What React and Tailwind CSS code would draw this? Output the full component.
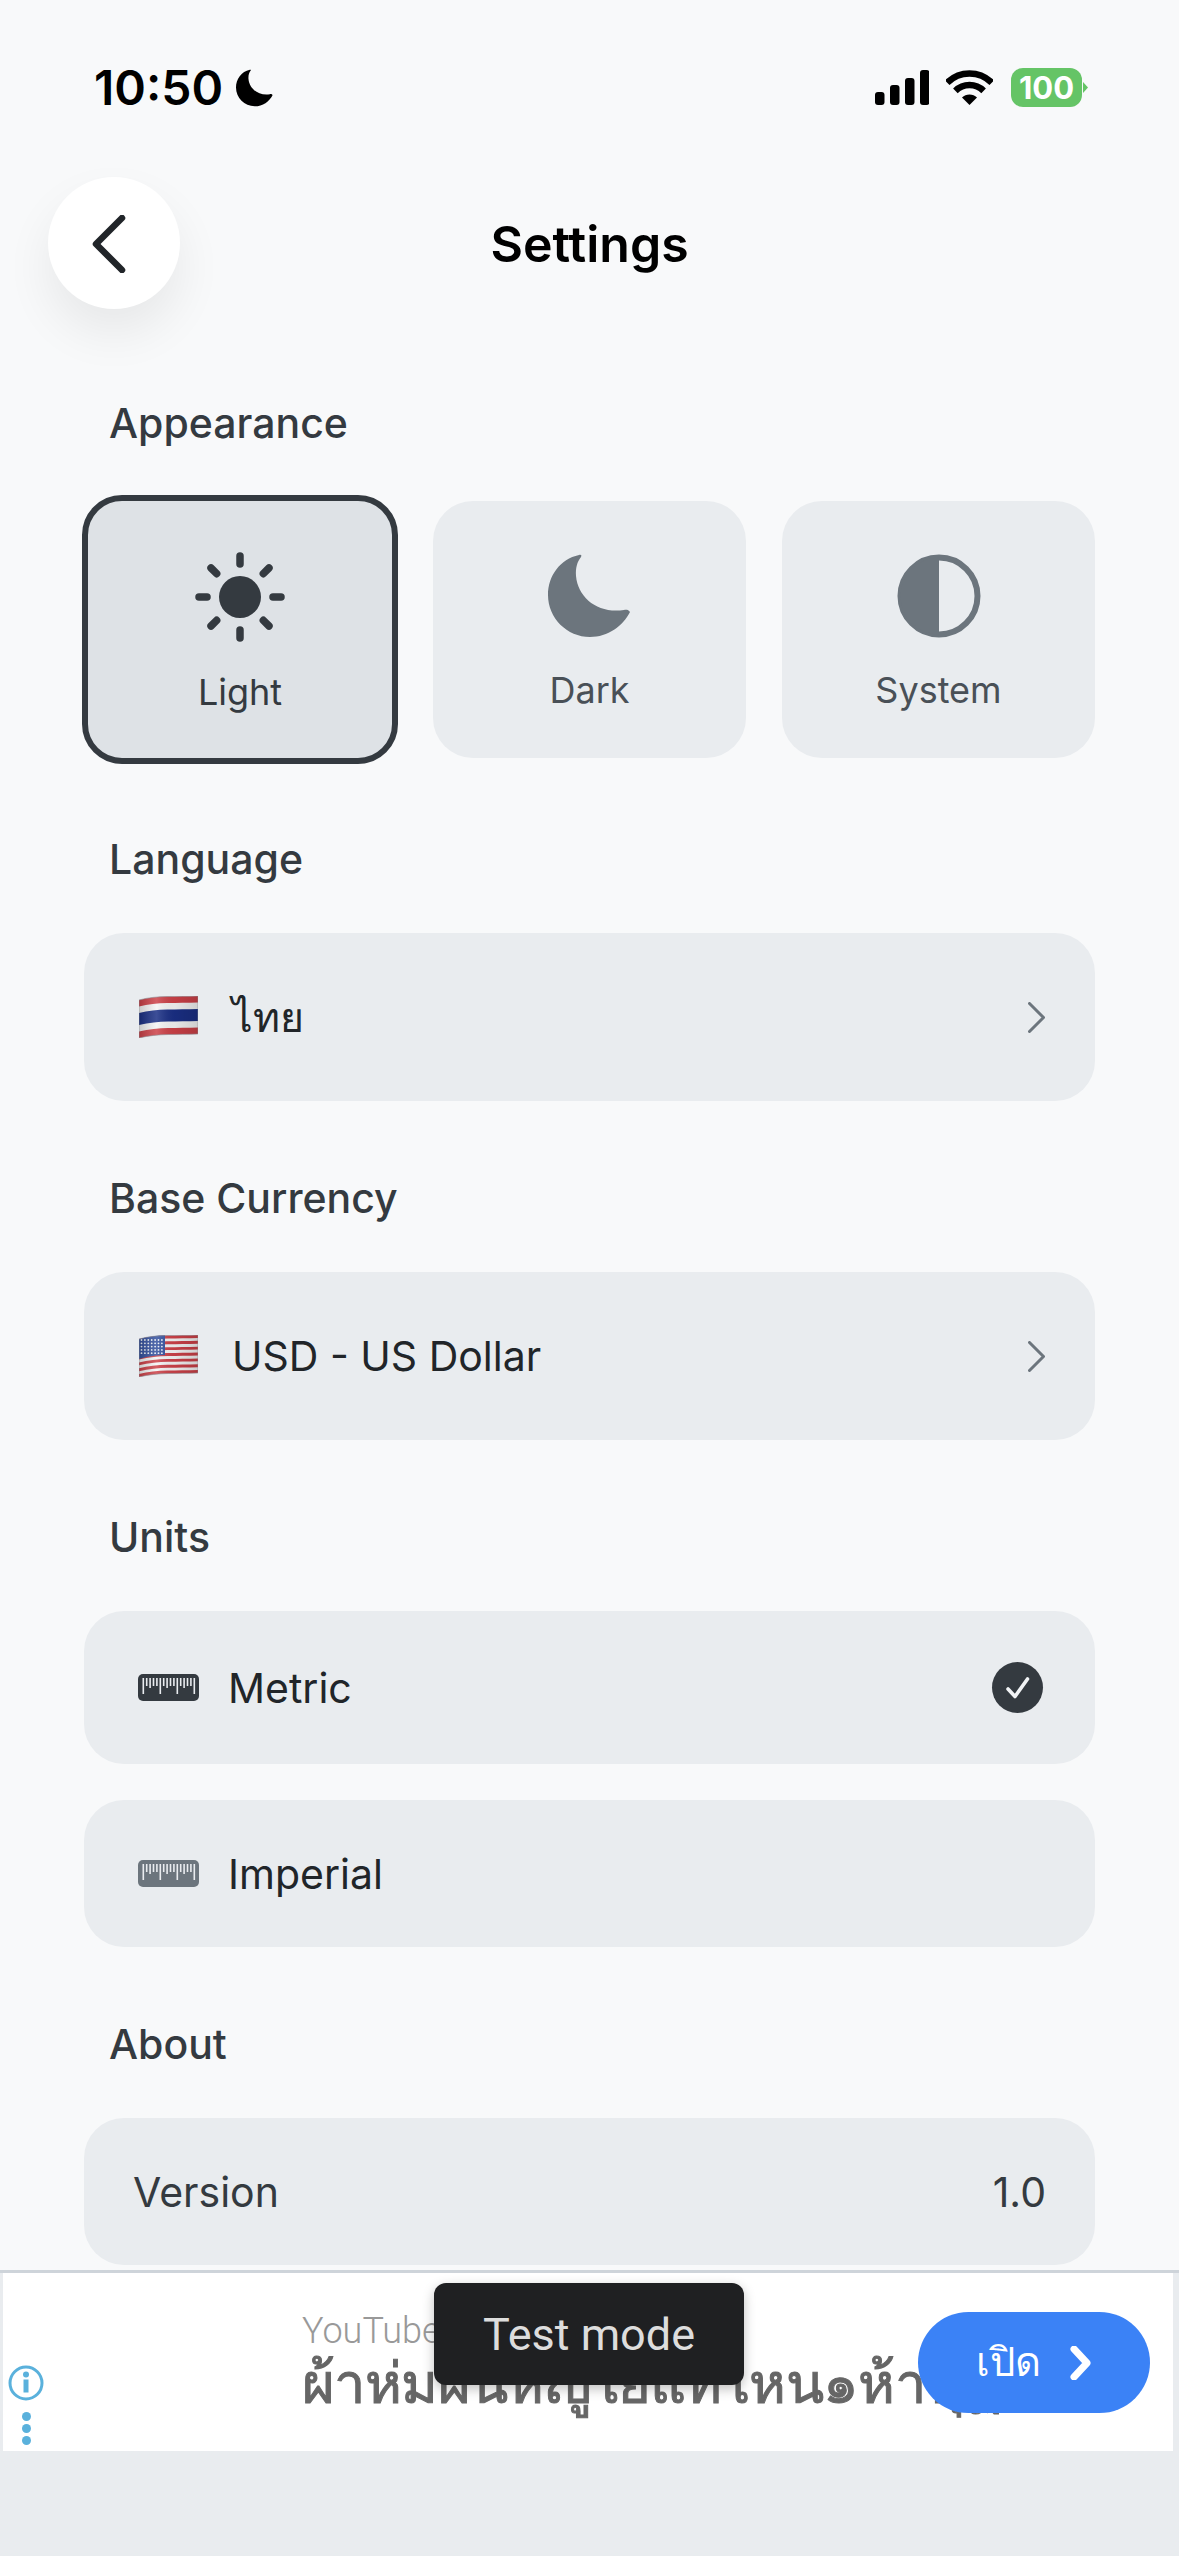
import React from "react";

const MOON = "M31 1 C12 5 0 22 0 41 C0 64 19 83 42 83 C60 83 75 72 82 58 C80.5 55.5 78 55.5 76 56 C50 60 30 44 28 22 C27.5 14 29 8 33 3 C34 1 33 .5 31 1 Z";

function Moon({ className, fill }) {
  return (
    <svg viewBox="0 0 83 84" className={className}>
      <path d={MOON} fill={fill} />
    </svg>
  );
}

function Sun() {
  const rays = [0, 45, 90, 135, 180, 225, 270, 315];
  return (
    <svg viewBox="0 0 90 90" className="w-[90px] h-[90px]">
      <circle cx="45" cy="45" r="21" fill="#343a40" />
      {rays.map((a) => (
        <line key={a} x1="45" y1="12" x2="45" y2="4" stroke="#343a40" strokeWidth="7.5" strokeLinecap="round" transform={`rotate(${a} 45 45)`} />
      ))}
    </svg>
  );
}

function Contrast() {
  return (
    <svg viewBox="0 0 84 84" className="w-[84px] h-[84px]">
      <circle cx="42" cy="42" r="38.5" fill="none" stroke="#6c757d" strokeWidth="6" />
      <path d="M42 3.5 A38.5 38.5 0 0 0 42 80.5 Z" fill="#6c757d" />
    </svg>
  );
}

function band(y0, y1) {
  return `M0 ${y0 + 4} C18 ${y0 - 1} 38 ${y0 + 1} 59 ${y0} L59 ${y1} C38 ${y1 + 1} 20 ${y1 - 1} 0 ${y1 + 4} Z`;
}

function FlagShade({ id }) {
  return (
    <>
      <defs>
        <linearGradient id={id} x1="0" y1="0" x2="1" y2="0">
          <stop offset="0" stopColor="#000" stopOpacity="0.18" />
          <stop offset="0.3" stopColor="#fff" stopOpacity="0.15" />
          <stop offset="0.6" stopColor="#000" stopOpacity="0.06" />
          <stop offset="1" stopColor="#000" stopOpacity="0.16" />
        </linearGradient>
      </defs>
      <path d={band(0, 38)} fill={`url(#${id})`} stroke="#8a8f96" strokeWidth="0.6" />
    </>
  );
}

function ThaiFlag() {
  return (
    <svg viewBox="0 0 59 42" className="w-[59px] h-[42px] shrink-0">
      <path d={band(0, 38)} fill="#cd4148" />
      <path d={band(6.5, 31.5)} fill="#f5f5f5" />
      <path d={band(13, 25)} fill="#1a2f85" />
      <FlagShade id="shade-th" />
    </svg>
  );
}

function USFlag() {
  const stripes = [0, 1, 2, 3, 4, 5, 6];
  const stars = [];
  for (let r = 0; r < 5; r++) {
    for (let c = 0; c < 7; c++) {
      stars.push(<circle key={`${r}-${c}`} cx={2.5 + c * 3.4} cy={5 + r * 3.3} r="0.9" fill="#eef1f7" />);
    }
  }
  return (
    <svg viewBox="0 0 59 42" className="w-[59px] h-[42px] shrink-0">
      <path d={band(0, 38)} fill="#f5f5f5" />
      {stripes.map((i) => (
        <path key={i} d={band(i * 5.85, i * 5.85 + 2.9)} fill="#cd4148" />
      ))}
      <path d="M0 4 C10 1.5 18 0.5 26 0.3 L26 20 C18 20 10 21 0 24 Z" fill="#34519f" />
      {stars}
      <FlagShade id="shade-us" />
    </svg>
  );
}

function Ruler({ fill }) {
  const ticks = [];
  for (let i = 0; i <= 15; i++) {
    const long = i % 5 === 0;
    const mid = !long && i % 5 === 2;
    ticks.push(<rect key={i} x={4.5 + i * 3.4} y="4" width="1.6" height={long ? 16 : mid ? 10 : 8} fill="#e9ecef" />);
  }
  return (
    <svg viewBox="0 0 61 27" className="w-[61px] h-[27px] shrink-0">
      <rect width="61" height="27" rx="5" fill={fill} />
      {ticks}
    </svg>
  );
}

function Chevron() {
  return (
    <svg viewBox="0 0 17 31" className="w-[17px] h-[31px] shrink-0">
      <path d="M1.5 1.5 L15.5 15.5 L1.5 29.5" fill="none" stroke="#6c757d" strokeWidth="3" strokeLinecap="round" strokeLinejoin="round" />
    </svg>
  );
}

function Label({ children }) {
  return <div className="h-[50px] pl-[25px] text-[41px] leading-[49px] font-medium text-[#343a40]">{children}</div>;
}

function SelectRow({ flag, text }) {
  return (
    <div className="h-[168px] rounded-[40px] bg-[#e9ecef] pl-[55px] pr-[50px] flex items-center gap-[34px] mt-[48px]">
      {flag}
      <span className="flex-1 text-[41px] leading-[50px] text-[#212529]">{text}</span>
      <Chevron />
    </div>
  );
}

function ThemeCard({ icon, label, labelClass, cardClass }) {
  return (
    <div className={cardClass}>
      <div className="h-[90px] flex items-center justify-center">{icon}</div>
      <span className={`text-[36px] leading-[44px] ${labelClass}`}>{label}</span>
    </div>
  );
}

export default function App() {
  return (
    <div className="w-[1179px] h-[2556px] overflow-hidden bg-[#f8f9fa] font-['Inter',sans-serif] flex flex-col">
      {/* status bar */}
      <div className="h-[177px] pt-[68px] pl-[94px] pr-[91px] flex items-start justify-between text-black">
        <div className="flex items-center gap-[13px] h-[39px]">
          <span className="text-[48px] leading-[39px] font-semibold">10:50</span>
          <Moon className="w-[37px] h-[38px]" fill="#000" />
        </div>
        <div className="flex items-center h-[39px]">
          <svg viewBox="0 0 54 35" className="w-[54px] h-[35px]">
            <rect x="0" y="22" width="9.5" height="13" rx="3" />
            <rect x="15" y="15" width="9.5" height="20" rx="3" />
            <rect x="30" y="8" width="9.5" height="27" rx="3" />
            <rect x="45" y="0" width="9.5" height="35" rx="3" />
          </svg>
          <svg viewBox="0 0 47 35" className="w-[47px] h-[35px] ml-[17px]">
            <path d="M1.2 12.7 A31.5 31.5 0 0 1 45.8 12.7" fill="none" stroke="#000" strokeWidth="6.5" />
            <path d="M9.4 20.9 A20 20 0 0 1 37.6 20.9" fill="none" stroke="#000" strokeWidth="6.5" />
            <path d="M23.5 35 L16 27.6 A10.5 10.5 0 0 1 31 27.6 Z" fill="#000" />
          </svg>
          <div className="ml-[18px] w-[71px] h-[39px] rounded-[12px] bg-[#65c466] flex items-center justify-center text-white text-[31px] leading-none font-bold">100</div>
          <svg viewBox="0 0 5 11" className="w-[5px] h-[11px] ml-[1px]">
            <path d="M0 0 L5 5.5 L0 11 Z" fill="#65c466" />
          </svg>
        </div>
      </div>

      {/* header */}
      <div className="h-[132px] relative flex items-center justify-center shrink-0">
        <button className="absolute left-[48px] top-0 w-[132px] h-[132px] rounded-full bg-white shadow-[0_24px_48px_rgba(0,0,0,0.07)] flex items-center justify-center">
          <svg viewBox="0 0 34 58" className="w-[34px] h-[58px] mr-[10px] mt-[2px]">
            <path d="M30 3 L4 29 L30 55" fill="none" stroke="#212529" strokeWidth="6.5" strokeLinecap="round" strokeLinejoin="round" />
          </svg>
        </button>
        <h1 className="text-[50px] leading-[60px] mt-[2px] font-semibold text-black">Settings</h1>
      </div>

      <div className="px-[84px] flex flex-col pt-[90px]">
        <Label>Appearance</Label>
        <div className="mt-[46px] -ml-[2px] h-[269px] flex items-center gap-[35px]">
          <ThemeCard
            icon={<Sun />}
            label="Light"
            labelClass="text-[#343a40] mt-[28px]"
            cardClass="w-[316px] h-[269px] rounded-[40px] border-[6px] border-[#343a40] bg-[#dee2e6] pt-[51px] flex flex-col items-center"
          />
          <ThemeCard
            icon={<Moon className="w-[83px] h-[84px]" fill="#6c757d" />}
            label="Dark"
            labelClass="text-[#495057] mt-[27px]"
            cardClass="w-[313px] h-[257px] rounded-[40px] bg-[#e9ecef] pt-[50px] flex flex-col items-center"
          />
          <ThemeCard
            icon={<Contrast />}
            label="System"
            labelClass="text-[#495057] mt-[27px]"
            cardClass="w-[313px] h-[257px] ml-[1px] rounded-[40px] bg-[#e9ecef] pt-[50px] flex flex-col items-center"
          />
        </div>

        <div className="mt-[71px]">
          <Label>Language</Label>
          <SelectRow flag={<ThaiFlag />} text="ไทย" />
        </div>

        <div className="mt-[73px]">
          <Label>Base Currency</Label>
          <SelectRow flag={<USFlag />} text="USD - US Dollar" />
        </div>

        <div className="mt-[73px]">
          <Label>Units</Label>
          <div className="mt-[48px] flex flex-col gap-[36px]">
            <div className="h-[153px] rounded-[40px] bg-[#e9ecef] pl-[54px] pr-[52px] flex items-center gap-[29px]">
              <Ruler fill="#343a40" />
              <span className="flex-1 text-[41px] leading-[50px] text-[#212529]">Metric</span>
              <div className="w-[51px] h-[51px] rounded-full bg-[#343a40] flex items-center justify-center">
                <svg viewBox="0 0 26 24" className="w-[26px] h-[24px]">
                  <path d="M3 13 L10 20.5 L22.5 3" fill="none" stroke="#f1f3f5" strokeWidth="3.6" strokeLinecap="round" strokeLinejoin="round" />
                </svg>
              </div>
            </div>
            <div className="h-[147px] rounded-[40px] bg-[#e9ecef] pl-[54px] pr-[53px] flex items-center gap-[29px]">
              <Ruler fill="#6c757d" />
              <span className="flex-1 text-[41px] leading-[50px] text-[#212529]">Imperial</span>
            </div>
          </div>
        </div>

        <div className="mt-[73px]">
          <Label>About</Label>
          <div className="mt-[48px] h-[147px] rounded-[40px] bg-[#e9ecef] pl-[49px] pr-[49px] flex items-center justify-between text-[41px] leading-[50px] text-[#343a40]">
            <span>Version</span>
            <span>1.0</span>
          </div>
        </div>
      </div>

      {/* ad banner */}
      <div className="mt-[5px] h-[181px] shrink-0 border-t-[3px] border-t-[#ced4da] bg-[#e9ecef] pl-[3px] pr-[6px]">
        <div className="relative h-full bg-white flex">
          <div className="w-[299px] shrink-0 flex flex-col pl-[5px] pt-[91px]">
            <svg viewBox="0 0 36 38" className="w-[36px] h-[38px]">
              <circle cx="18" cy="19" r="16" fill="none" stroke="#5ab1dc" strokeWidth="3" />
              <circle cx="18" cy="10.5" r="3" fill="#5ab1dc" />
              <rect x="15.5" y="15.5" width="5" height="13" fill="#5ab1dc" />
            </svg>
            <div className="w-[36px] flex flex-col items-center gap-[3px] mt-[10px]">
              <span className="w-[9px] h-[9px] rounded-full bg-[#5ab1dc]" />
              <span className="w-[9px] h-[9px] rounded-full bg-[#5ab1dc]" />
              <span className="w-[9px] h-[9px] rounded-full bg-[#5ab1dc]" />
            </div>
          </div>
          <div className="w-[720px] overflow-hidden pt-[36px] font-['Roboto',sans-serif]">
            <div className="text-[36px] leading-[44px] text-[#999999] font-light">YouTube</div>
            <div className="text-[56px] leading-[62px] tracking-[-0.6px] text-[#666666] [-webkit-text-stroke:1px_#666666] whitespace-nowrap">ผ้าห่มผืนหญูใยแท้ไหน๑ห้าฟุฏ</div>
          </div>

          <div className="absolute left-[431px] top-[10px] w-[310px] h-[102px] rounded-[12px] bg-[#1f2022] shadow-[0_4px_12px_rgba(0,0,0,0.25)] flex items-center justify-center pt-[2px] font-['Roboto',sans-serif] text-[45px] text-[#dddddd]">
            Test mode
          </div>

          <div className="absolute left-[915px] top-[39px] w-[232px] h-[101px] rounded-full bg-[#3b82f6] flex items-center justify-center gap-[28px] font-['Roboto',sans-serif] text-[40px] text-white">
            <span>เปิด</span>
            <svg viewBox="0 0 24 34" className="w-[24px] h-[34px]">
              <path d="M5 3 L18 17 L5 31" fill="none" stroke="#fff" strokeWidth="7" strokeLinecap="round" strokeLinejoin="round" />
            </svg>
          </div>
        </div>
      </div>

      <div className="flex-1 bg-[#e9ecef]" />
    </div>
  );
}
